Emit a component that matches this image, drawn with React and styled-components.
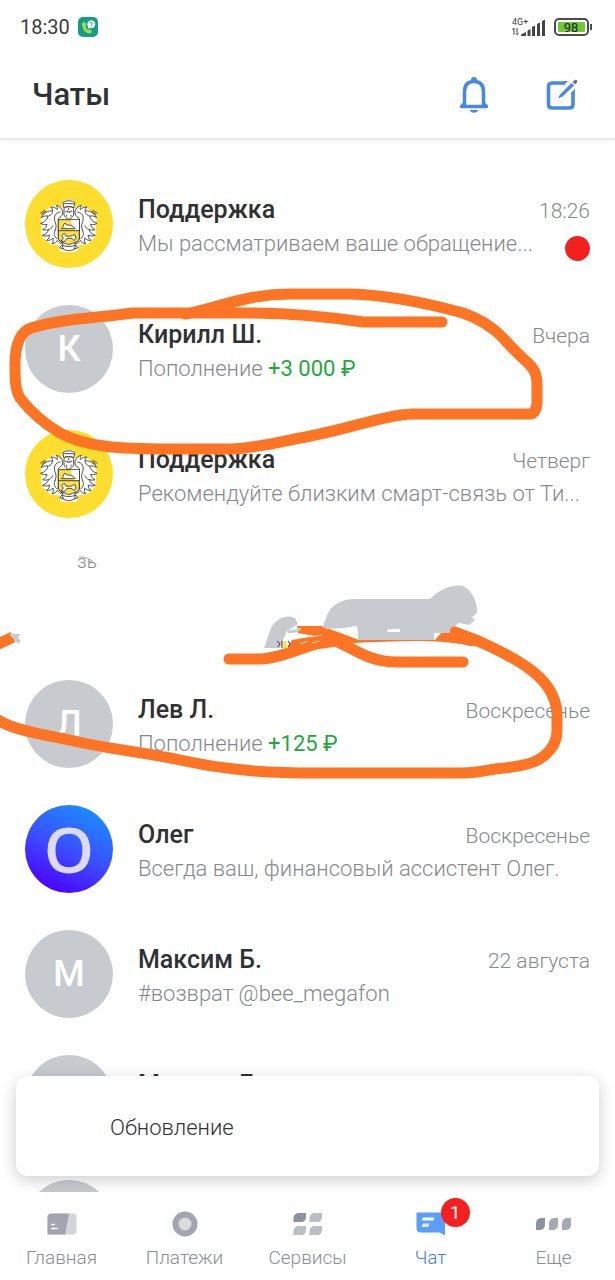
import styled, { createGlobalStyle } from "styled-components";

const GlobalStyle = createGlobalStyle`
  * {
    box-sizing: border-box;
  }

  body {
    margin: 0;
    background: #fff;
    color: #303133;
    font-family: Roboto, "Liberation Sans", sans-serif;
  }
`;

const Screen = styled.div`
  position: relative;
  display: flex;
  flex-direction: column;
  height: 100vh;
  overflow: hidden;
`;

const StatusBar = styled.div`
  display: flex;
  align-items: center;
  justify-content: space-between;
  height: 54px;
  padding: 0 22px 0 20px;
  font-size: 20px;
  color: #3c3c3c;
`;

const StatusGroup = styled.div`
  display: flex;
  align-items: center;
  gap: 8px;
`;

const Header = styled.header`
  display: flex;
  align-items: center;
  justify-content: space-between;
  height: 86px;
  padding: 0 31px 2px 32px;
  border-bottom: 2px solid #e9e9e9;
  box-shadow: 0 2px 4px #f5f5f5;
`;

const Title = styled.h1`
  margin: 0;
  font-size: 31px;
  line-height: 40px;
  font-weight: 500;
`;

const HeaderActions = styled.div`
  display: flex;
  gap: 44px;
`;

const IconButton = styled.button`
  display: flex;
  align-items: center;
  justify-content: center;
  width: 44px;
  height: 44px;
  padding: 0;
  border: 0;
  background: none;
`;

const ChatList = styled.ul`
  flex: 1;
  min-height: 0;
  margin: 0;
  padding: 21px 0 0;
  overflow: hidden;
  list-style: none;
`;

const ChatRow = styled.li`
  display: flex;
  align-items: center;
  gap: 25px;
  height: 125px;
  padding: 0 25px;
`;

const Avatar = styled.div`
  display: flex;
  flex: none;
  align-items: center;
  justify-content: center;
  width: 88px;
  height: 88px;
  border-radius: 50%;
  background: ${({ $background }) => $background || "#c7cbd0"};
  color: ${({ $color }) => $color || "#fff"};
  font-family: ${({ $large }) => ($large ? `"Open Sans", sans-serif` : "inherit")};
  font-size: ${({ $large }) => ($large ? "64px" : "36px")};
  font-weight: ${({ $large }) => ($large ? 600 : 500)};
  line-height: 88px;
`;

const ChatBody = styled.div`
  flex: 1;
  min-width: 0;
  padding-top: 6px;
`;

const ChatLine = styled.div`
  display: flex;
  align-items: baseline;
  justify-content: space-between;
  gap: 24px;
  height: 34px;
`;

const Name = styled.h2`
  margin: 0;
  font-size: 25px;
  line-height: 34px;
  font-weight: 500;
`;

const Time = styled.time`
  font-size: 21px;
  line-height: 34px;
  font-weight: 300;
  color: #85888d;
`;

const Preview = styled.p`
  flex: 1;
  min-width: 0;
  margin: 0;
  overflow: hidden;
  font-size: 22px;
  line-height: 34px;
  font-weight: 300;
  color: #85888d;
  text-overflow: ellipsis;
  white-space: nowrap;
`;

const Amount = styled.span`
  font-weight: 400;
  color: #1fa83f;
`;

const Unread = styled.span`
  align-self: flex-end;
  width: 25px;
  height: 25px;
  border-radius: 50%;
  background: #f4201f;
`;

const Toast = styled.div`
  position: absolute;
  right: 16px;
  bottom: 104px;
  left: 16px;
  display: flex;
  align-items: center;
  height: 100px;
  padding: 2px 94px 0;
  border-radius: 12px;
  background: #fff;
  box-shadow: 0 4px 16px rgba(0, 0, 0, 0.2);
  font-size: 22px;
  font-weight: 300;
`;

const TabBar = styled.nav`
  position: relative;
  display: grid;
  grid-template-columns: repeat(5, 1fr);
  height: 88px;
  background: #fff;
`;

const Tab = styled.a`
  display: flex;
  flex-direction: column;
  align-items: center;
  padding-top: 14px;
  color: ${({ $active }) => ($active ? "#437fce" : "#8a8d93")};
  font-size: 19px;
  line-height: 28px;
  font-weight: 300;
  text-decoration: none;
`;

const TabIcon = styled.span`
  position: relative;
  display: flex;
  align-items: center;
  height: 36px;
  margin-bottom: 2px;
`;

const Badge = styled.span`
  position: absolute;
  top: -8px;
  left: 25px;
  width: 29px;
  height: 29px;
  border-radius: 50%;
  background: #f4201f;
  color: #fff;
  line-height: 29px;
  font-weight: 400;
  text-align: center;
`;

const Drawing = styled.svg`
  position: absolute;
  top: 0;
  left: 0;
  width: 100%;
  pointer-events: none;
`;

const CallerIcon = () => (
  <svg width="20" height="20" viewBox="0 0 20 20" aria-hidden="true">
    <rect width="20" height="20" rx="5" fill="#149c86" />
    <path
      d="M4 6 L7 5 L8.500 8.500 L7.500 10 C8 11.500 9 12.500 10.200 13 L12 12 L14 15 L12 16.500 C7 16.500 3.500 11 4 6Z"
      fill="#9be04c"
    />
    <path d="M9.500 11.500 L10 9.500 A4 4 0 1 1 12 11Z" fill="#fff" />
    <path
      d="M11.900 6.600 C12 5 14.600 5.200 14.400 6.700 C14.200 7.600 13.200 7.600 13.200 8.600 M13.200 9.500 V10.100"
      fill="none"
      stroke="#149c86"
    />
  </svg>
);

const Signal = () => (
  <svg width="34" height="22" viewBox="0 0 34 22" aria-hidden="true">
    <text x="0" y="9" fontSize="9" fill="#444">
      4G+
    </text>
    <path
      d="M2 12 V19 M0.500 13.800 L2 12 M5 12 V19 M5 19 L6.500 17.500"
      fill="none"
      stroke="#444"
    />
    <path
      d="M9 20 V18.500 L14 16 V20Z M15.500 14.500 L18.500 13 V20 H15.500Z M20 11 L23 9.500 V20 H20Z M25 8 L28 6.500 V20 H25Z M30 5 L33 3.500 V20 H30Z"
      fill="#444"
    />
  </svg>
);

const Battery = () => (
  <svg width="39" height="18" viewBox="0 0 39 18" aria-hidden="true">
    <rect x="1" y="1" width="33" height="16" rx="4" fill="#fff" stroke="#4b4b4b" strokeWidth="2" />
    <rect x="4" y="4" width="27" height="10" rx="1" fill="#6fc933" />
    <rect x="36" y="6" width="2" height="6" fill="#4b4b4b" />
    <text x="17" y="14" fontSize="13" textAnchor="middle" fill="#222">
      98
    </text>
  </svg>
);

const BellIcon = () => (
  <svg width="30" height="38" viewBox="0 0 30 38" fill="none" aria-hidden="true">
    <circle cx="15" cy="4" r="3" fill="#4788e2" />
    <path
      d="M2 30.500 H28 M5.500 29.500 V16 C5.500 9 9 5.500 15 5.500 S24.500 9 24.500 16 V29.500"
      stroke="#4788e2"
      strokeWidth="3.500"
    />
    <path d="M1 32 V29.500 L6 25 V31 M29 32 V29.500 L24 25 V31" fill="#4788e2" />
    <path d="M11 34 H19 C18.500 37.500 11.500 37.500 11 34Z" fill="#4788e2" />
  </svg>
);

const ComposeIcon = () => (
  <svg width="34" height="34" viewBox="0 0 34 34" fill="none" aria-hidden="true">
    <path
      d="M20 5 H7 C4.500 5 3.500 6.500 3.500 8.500 V26.500 C3.500 29 5 30 7.500 30 H24 C26.500 30 28 29 28 26.500 V14"
      stroke="#4788e2"
      strokeWidth="3.600"
    />
    <path d="M19 3 H23 L18.500 7.500 V5Z M30 11 L26 15 H30Z" fill="#4788e2" />
    <path d="M13 20.500 L15 16.500 L26.500 5 L29 7.500 L17.500 18.500Z" fill="#4788e2" />
    <path d="M27.500 4 L29 2.500 C31 0.500 33.500 3 31.500 5 L30 6.500Z" fill="#65748b" />
  </svg>
);

const CrestLeaves = () => (
  <g fill="#fff" stroke="#2d2d2d" strokeWidth="2.500" strokeLinejoin="round" strokeLinecap="round">
    <path d="M130 106 C126 96 121 90 111 88 C114 93 115 97 114 101 C109 95 103 93 94 93 C98 97 100 100 100 105 C86 103 74 110 65 125 C72 120 79 119 86 120 C84 130 77 138 64 142 C70 146 76 147 83 145 C82 152 78 157 70 161 C76 163 82 163 88 160 C86 168 80 175 69 178 C76 181 84 181 90 177 C91 184 88 189 82 193 C90 194 97 191 101 186 C103 193 102 198 98 203 C107 202 112 198 114 193 C118 199 123 203 132 204 L117 190 V128 L128 118Z" />
    <path
      d="M122 108 C108 110 101 122 108 140 C112 148 110 158 107 164 M88 120 C95 117 99 113 100 107 M90 160 C95 158 98 154 100 149 M107 164 C103 172 104 180 112 188 M68 115 L80 106 M64 111 L76 103"
      fill="none"
    />
  </g>
);

const Crest = () => (
  <svg width="88" height="88" viewBox="17 12 264 264" aria-hidden="true">
    <path
      d="M134 75 H162 L166 105 L184 91 L201 98 L230 124 L226 145 L226 180 L202 202 L176 205 L171 224 H126 L121 205 L94 202 L68 177 L70 142 L66 124 L95 94 L113 90 L130 104Z"
      fill="#fff"
      stroke="#fff"
      strokeWidth="6"
      strokeLinejoin="round"
    />
    <CrestLeaves />
    <g transform="translate(297 0) scale(-1 1)">
      <CrestLeaves />
    </g>
    <g fill="#fff" stroke="#2d2d2d" strokeWidth="2.500" strokeLinejoin="round">
      <path d="M133 95 L131 79 C135 73 162 73 166 79 L164 95 C155 90 142 90 133 95Z" />
      <path d="M133 83 H164" fill="none" />
      <path d="M134 97 C138 91 159 91 163 97 V117 C161 123 154 127 148 130 C142 127 136 123 134 117Z" />
      <path d="M138 106 H146 V111 M151 111 V106 H159 M148 96 V103 M142 116 V122 M155 116 V122" fill="none" />
      <path d="M117 131 H180 V186 C180 196 168 199 148 206 C130 199 117 196 117 186Z" fill="#fbe043" />
      <path d="M154 132 H179 V162 H163Z" fill="#fff" stroke="none" />
      <path d="M117 164 H180" />
      <path d="M126 158 C134 154 130 147 137 141 C141 146 145 149 151 147 C158 149 164 153 168 158Z" />
      <path d="M125 195 L132 186 L127 178 L135 172 L140 180 C149 182 158 181 166 175 L170 186 L164 194 L158 187 H143 L136 196Z" />
      <path d="M128 207 C140 213 157 213 169 207 L165 219 C157 225 140 225 132 219Z" />
      <path d="M128 207 L121 215 L132 219 M169 207 L176 215 L165 219" fill="none" />
    </g>
  </svg>
);

const HomeIcon = () => (
  <svg width="30" height="22" viewBox="0 0 30 22" aria-hidden="true">
    <rect x="0.500" y="0.500" width="29" height="21" rx="4" fill="#d3d5db" />
    <path d="M4.500 0.500 H22 L18 21.500 H0.500 V4.500 C0.500 2 2 0.500 4.500 0.500Z" fill="#a2a5b1" />
    <path d="M4 11.500 H8 M4 15.500 H11" stroke="#fff" strokeWidth="1.500" />
  </svg>
);

const PaymentsIcon = () => (
  <svg width="26" height="26" viewBox="0 0 26 26" aria-hidden="true">
    <circle cx="13" cy="13" r="12.500" fill="#a2a5b1" />
    <circle cx="13" cy="13" r="6.500" fill="#d9dbdf" />
  </svg>
);

const ServicesIcon = () => (
  <svg width="30" height="24" viewBox="0 0 30 24" aria-hidden="true">
    <path d="M6 1 H13 V5 C13 8 11 10 8 10 H0.500 V6 C0.500 3 3 1 6 1Z" fill="#8e919f" />
    <path d="M22 1 H29 V5 C29 8 27 10 24 10 H16.500 V6 C16.500 3 19 1 22 1Z" fill="#bbbdc5" />
    <path d="M6 14 H13 V18 C13 21 11 23 8 23 H0.500 V19 C0.500 16 3 14 6 14Z" fill="#bbbdc5" />
    <path d="M22 14 H29 V18 C29 21 27 23 24 23 H16.500 V19 C16.500 16 19 14 22 14Z" fill="#bbbdc5" />
  </svg>
);

const ChatIcon = () => (
  <svg width="30" height="24" viewBox="0 0 30 24" aria-hidden="true">
    <path d="M0.500 0.500 H25 C28 0.500 29 2 29 4 V23.500 L24 20.500 H5 C2 20.500 0.500 19 0.500 16Z" fill="#5b9df9" />
    <path d="M7 5.500 H18.500 L17.500 8.500 H5.500Z" fill="#fff" />
    <path d="M7 11.500 H13.500 L12.500 15 H5.500Z" fill="#dce9ff" />
  </svg>
);

const MoreIcon = () => (
  <svg width="36" height="12" viewBox="0 0 36 12" aria-hidden="true">
    <path d="M0 12 V6 C0 2 2 0 6 0 H9 V6 C9 10 7 12 3 12Z" fill="#8e919f" />
    <path d="M13 12 V6 C13 2 15 0 19 0 H22 V6 C22 10 20 12 16 12Z" fill="#a6a8b2" />
    <path d="M26 12 V6 C26 2 28 0 32 0 H35 V6 C35 10 33 12 29 12Z" fill="#a6a8b2" />
  </svg>
);

const Scribbles = () => (
  <Drawing viewBox="0 0 615 1280" fill="none" aria-hidden="true">
    <text x="77" y="568" fontSize="19" fontWeight="300" fill="#85888d">
      зь
    </text>
    <path d="M76 553 L86 557 L98 564 V552 H76Z" fill="#fff" />
    <path d="M79 557 C85 556 92 560 96 565" stroke="#a5a89a" />
    <g stroke="#fe7425" strokeWidth="11" strokeLinecap="round" strokeLinejoin="round">
      <path d="M185 314 C215 309 245 294 290 294 H350 C390 295 430 304 463 313 C480 319 493 327 503 338 C514 350 521 357 529 364 C536 371 537 377 537 385 V402 C537 409 534 414 530 414 H470 L413 414 C383 415 350 429 300 438 C275 443 250 449 230 449 H170 C120 449 85 447 60 433 C43 423 30 411 20 398 C15 390 15 379 15 365 C15 345 20 332 31 328 C60 319 95 318 133 313 H230 C290 312 330 317 363 322 H442" />
      <path d="M-4 645 L13 637" strokeLinecap="butt" />
      <path d="M-5 718 C9 729 40 734 65 739 C105 749 145 752 185 761 C232 771 270 773 320 773 H463 C482 773 488 769 505 768 C530 765 541 761 550 750 C555 744 557 738 557 730 V713 C556 697 547 681 527 667 C512 657 500 651 487 645 C470 637 459 635 450 634" />
      <path d="M229 659 H260 C285 658 310 643 332 640 C350 645 365 662 397 662 H463" />
    </g>
    <path
      d="M297 626 H321 L346 635 L359 640 H435 L449 624 L481 636 L492 645 L470 646 C435 638 390 642 354 643 L327 648 L285 653 L292 640 L315 636 L298 633Z"
      fill="#fe7425"
    />
    <path d="M300 644 L308 641 M311 637 L322 635 M312 643 L319 641" stroke="#ffe3d1" />
    <path
      d="M323 627 L327 615 C331 605 342 599 354 599 L430 599 C440 589 452 584 463 586 C472 590 478 603 477 613 L472 617 L475 620 L469 625 L459 623 L450 629 V633 H434 V640 H358 V633 L357 626 L343 628 L326 629Z"
      fill="#c7cbd0"
    />
    <path d="M264 648 L271 628 C276 619 286 614 295 618 L298 624 L287 631 L283 640 L280 648Z" fill="#c7cbd0" />
    <path d="M388 629 H400 V632 H387Z" fill="#fff" />
    <path d="M288 632 C293 630 298 633 300 628" stroke="#c7cbd0" strokeWidth="3" />
    <path d="M277 641 L280 644 L278 647 M282 641 V648 M288 641 L290 644 L288 647" stroke="#333" />
    <path d="M285 641 V648" stroke="#ffe32c" strokeWidth="3" />
    <path d="M9 634 L20 634 L18 638 L21 641 L18 644 L14 639Z" fill="#c7cbd0" />
  </Drawing>
);

const chats = [
  { name: "Поддержка", time: "18:26", text: "Мы рассматриваем ваше обращение...", support: true, unread: true },
  { name: "Кирилл Ш.", time: "Вчера", text: "Пополнение ", amount: "+3 000 ₽", letter: "К" },
  { name: "Поддержка", time: "Четверг", text: "Рекомендуйте близким смарт-связь от Ти...", support: true },
  { empty: true },
  { name: "Лев Л.", time: "Воскресенье", text: "Пополнение ", amount: "+125 ₽", letter: "Л" },
  { name: "Олег", time: "Воскресенье", text: "Всегда ваш, финансовый ассистент Олег.", letter: "О", assistant: true },
  { name: "Максим Б.", time: "22 августа", text: "#возврат @bee_megafon", letter: "М" },
  { name: "Максим Б." },
  {},
];

const ChatAvatar = ({ support, assistant, letter }) => {
  if (support) {
    return (
      <Avatar $background="#fddd2d">
        <Crest />
      </Avatar>
    );
  }
  if (assistant) {
    return (
      <Avatar $background="linear-gradient(205deg, #1b8dff 10%, #3a50ff 50%, #4c00ff 90%)" $color="#dcdafc" $large>
        {letter}
      </Avatar>
    );
  }
  return <Avatar>{letter}</Avatar>;
};

const Chat = ({ chat }) => (
  <ChatRow>
    {!chat.empty && (
      <>
        <ChatAvatar {...chat} />
        <ChatBody>
          <ChatLine>
            {chat.name && <Name>{chat.name}</Name>}
            {chat.time && <Time>{chat.time}</Time>}
          </ChatLine>
          <ChatLine>
            <Preview>
              {chat.text}
              {chat.amount && <Amount>{chat.amount}</Amount>}
            </Preview>
            {chat.unread && <Unread />}
          </ChatLine>
        </ChatBody>
      </>
    )}
  </ChatRow>
);

const tabs = [
  { label: "Главная", Icon: HomeIcon },
  { label: "Платежи", Icon: PaymentsIcon },
  { label: "Сервисы", Icon: ServicesIcon },
  { label: "Чат", Icon: ChatIcon, badge: 1 },
  { label: "Еще", Icon: MoreIcon },
];

const App = () => (
  <>
    <GlobalStyle />
    <Screen>
      <StatusBar>
        <StatusGroup>
          <span>18:30</span>
          <CallerIcon />
        </StatusGroup>
        <StatusGroup>
          <Signal />
          <Battery />
        </StatusGroup>
      </StatusBar>
      <Header>
        <Title>Чаты</Title>
        <HeaderActions>
          <IconButton aria-label="Уведомления">
            <BellIcon />
          </IconButton>
          <IconButton aria-label="Новый чат">
            <ComposeIcon />
          </IconButton>
        </HeaderActions>
      </Header>
      <ChatList>
        {chats.map((chat, index) => (
          <Chat key={index} chat={chat} />
        ))}
      </ChatList>
      <Toast role="status">Обновление</Toast>
      <TabBar>
        {tabs.map(({ label, Icon, badge }) => (
          <Tab key={label} href="#" $active={Boolean(badge)}>
            <TabIcon>
              <Icon />
              {badge && <Badge>{badge}</Badge>}
            </TabIcon>
            {label}
          </Tab>
        ))}
      </TabBar>
      <Scribbles />
    </Screen>
  </>
);

export default App;
